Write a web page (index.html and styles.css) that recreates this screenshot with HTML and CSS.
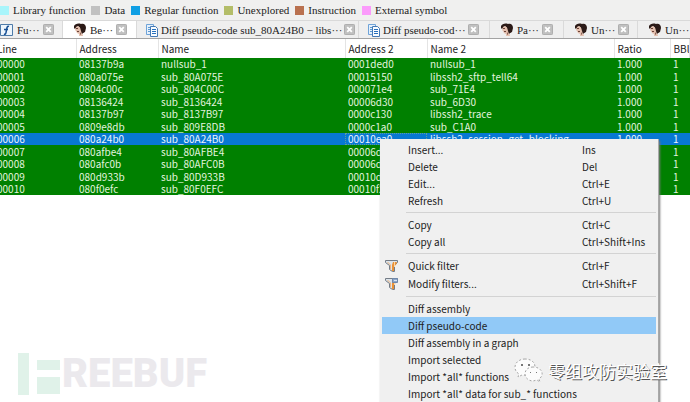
FILE: index.html
```html
<!DOCTYPE html>
<html lang="en">
<head>
<meta charset="utf-8">
<title>Diff results</title>
<link rel="stylesheet" href="styles.css">
</head>
<body>
<svg class="defs" aria-hidden="true">
  <symbol id="head" viewBox="0 0 14 14">
    <path fill="#2b1a17" d="M1 3C2 1 5 0 8 1c3-1 5 1 5 4l-1 4-2 1-2-4-3-3-3 3-1-1z"/>
    <path fill="#e3bfae" d="M3 4c2-2 4 0 5 2l1 3 1 4H6V11l-2-1-1-2-1-1z"/>
    <path fill="#6a4237" d="M3 5h2v1H3zM4 8h2v1H4zM7 9l1 2-1 1z"/>
    <path fill="#2b1a17" d="M7 4l5 1-1 4-2 2-1-3z"/>
  </symbol>
  <symbol id="diff" viewBox="0 0 14 14">
    <path fill="#e5f0fb" stroke="#6fa3d8" d="M1.500 1.500h7v10h-7z"/>
    <path stroke="#5c99d3" d="M3 4.500h4M3 6.500h3M3 8.500h3"/>
    <path fill="#f9fcff" stroke="#4579b4" d="M5.500 3.500h5l2 2v8h-7z"/>
    <path stroke="#2870bd" d="M7 6.500h4M7 8.500h4M7 10.500h4"/>
  </symbol>
  <symbol id="close" viewBox="0 0 12 12">
    <rect class="close-bg" x=".5" y=".5" width="11" height="11" rx="1"/>
    <path stroke="#fff" stroke-width="2" d="M3.500 3.500l5 5M8.500 3.500l-5 5"/>
  </symbol>
  <symbol id="funnel" viewBox="0 0 14 14">
    <path fill="#dce4eb" stroke="#747c86" d="M.5 1.500h12v2l-3 3v6h-2l-3-2v-4l-4-3z"/>
    <path fill="#e99138" d="M8 3h4l-1 3-2 1v5H7V6z"/>
    <path stroke="#fbd6a4" d="M9.500 3v5"/>
    <path stroke="#f0b47c" fill="none" d="M2.500 3l3 3v4"/>
  </symbol>
</svg>

<main class="app">
  <div class="legend">
    <span class="key library">Library function</span>
    <span class="key data">Data</span>
    <span class="key regular">Regular function</span>
    <span class="key unexplored">Unexplored</span>
    <span class="key instruction">Instruction</span>
    <span class="key external">External symbol</span>
  </div>

  <nav class="tabs">
    <div class="tab tab-first"><svg class="icon" viewBox="0 0 14 14" aria-hidden="true"><path fill="#edf5fc" stroke="#4e7ba9" d="M.5 1.500h12v11H.5z"/><path fill="none" stroke="#174f94" stroke-width="1.500" d="M9 3.500c-2-1-2 1-3 6-.5 2-1 2-2 1.500M4 6.500h4"/></svg><button class="label">Fu···</button><button class="close" aria-label="Close"><svg aria-hidden="true"><use href="#close"/></svg></button></div>
    <div class="tab tab-small active"><svg class="icon" aria-hidden="true"><use href="#head"/></svg><button class="label">Be···</button><button class="close" aria-label="Close"><svg aria-hidden="true"><use href="#close"/></svg></button></div>
    <div class="tab tab-large"><svg class="icon" aria-hidden="true"><use href="#diff"/></svg><button class="label">Diff pseudo-code sub_80A24B0 − libs···</button><button class="close" aria-label="Close"><svg aria-hidden="true"><use href="#close"/></svg></button></div>
    <div class="tab tab-medium"><svg class="icon" aria-hidden="true"><use href="#diff"/></svg><button class="label">Diff pseudo-cod···</button><button class="close" aria-label="Close"><svg aria-hidden="true"><use href="#close"/></svg></button></div>
    <div class="tab tab-small"><svg class="icon" aria-hidden="true"><use href="#head"/></svg><button class="label">Pa···</button><button class="close" aria-label="Close"><svg aria-hidden="true"><use href="#close"/></svg></button></div>
    <div class="tab tab-small"><svg class="icon" aria-hidden="true"><use href="#head"/></svg><button class="label">Un···</button><button class="close" aria-label="Close"><svg aria-hidden="true"><use href="#close"/></svg></button></div>
    <div class="tab tab-small"><svg class="icon" aria-hidden="true"><use href="#head"/></svg><button class="label">Un···</button><button class="close" aria-label="Close"><svg aria-hidden="true"><use href="#close"/></svg></button></div>
  </nav>

  <table class="results">
    <colgroup><col class="c-line"><col class="c-addr"><col class="c-name"><col class="c-addr"><col class="c-name"><col class="c-ratio"><col></colgroup>
    <thead><tr><th>Line</th><th>Address</th><th>Name</th><th>Address 2</th><th>Name 2</th><th>Ratio</th><th>BBlocks</th></tr></thead>
    <tbody>
      <tr><td>00000</td><td>08137b9a</td><td>nullsub_1</td><td>0001ded0</td><td>nullsub_1</td><td>1.000</td><td>1</td></tr>
      <tr><td>00001</td><td>080a075e</td><td>sub_80A075E</td><td>00015150</td><td>libssh2_sftp_tell64</td><td>1.000</td><td>1</td></tr>
      <tr><td>00002</td><td>0804c00c</td><td>sub_804C00C</td><td>000071e4</td><td>sub_71E4</td><td>1.000</td><td>1</td></tr>
      <tr><td>00003</td><td>08136424</td><td>sub_8136424</td><td>00006d30</td><td>sub_6D30</td><td>1.000</td><td>1</td></tr>
      <tr><td>00004</td><td>08137b97</td><td>sub_8137B97</td><td>0000c130</td><td>libssh2_trace</td><td>1.000</td><td>1</td></tr>
      <tr><td>00005</td><td>0809e8db</td><td>sub_809E8DB</td><td>0000c1a0</td><td>sub_C1A0</td><td>1.000</td><td>1</td></tr>
      <tr class="selected"><td>00006</td><td>080a24b0</td><td>sub_80A24B0</td><td class="focus">00010ea0</td><td>libssh2_session_get_blocking</td><td>1.000</td><td>1</td></tr>
      <tr><td>00007</td><td>080afbe4</td><td>sub_80AFBE4</td><td>00006d</td><td></td><td></td><td>1</td></tr>
      <tr><td>00008</td><td>080afc0b</td><td>sub_80AFC0B</td><td>00006d</td><td></td><td></td><td>1</td></tr>
      <tr><td>00009</td><td>080d933b</td><td>sub_80D933B</td><td>00010d</td><td></td><td></td><td>1</td></tr>
      <tr><td>00010</td><td>080f0efc</td><td>sub_80F0EFC</td><td>00010f2</td><td></td><td></td><td>1</td></tr>
    </tbody>
  </table>

  <div class="brand"><svg class="brand-mark" viewBox="0 0 44 42" aria-hidden="true"><path fill="#e0f2e9" d="M0 0h11v42H0zM19 7h23v10H19zM19 24h23v17H19z"/></svg><span>REEBUF</span></div>

  <div class="menu" role="menu">
    <button role="menuitem"><span>Insert...</span><kbd>Ins</kbd></button>
    <button role="menuitem"><span>Delete</span><kbd>Del</kbd></button>
    <button role="menuitem"><span>Edit...</span><kbd>Ctrl+E</kbd></button>
    <button role="menuitem"><span>Refresh</span><kbd>Ctrl+U</kbd></button>
    <hr>
    <button role="menuitem"><span>Copy</span><kbd>Ctrl+C</kbd></button>
    <button role="menuitem"><span>Copy all</span><kbd>Ctrl+Shift+Ins</kbd></button>
    <hr>
    <button role="menuitem" class="with-icon"><svg aria-hidden="true"><use href="#funnel"/></svg><span>Quick filter</span><kbd>Ctrl+F</kbd></button>
    <button role="menuitem" class="with-icon"><svg viewBox="0 0 14 14" aria-hidden="true"><use href="#funnel"/><path fill="#8fa6c8" stroke="#6f88aa" d="M7.500 1.500h5v4h-5z"/><path stroke="#d8e6f5" d="M9 3.500h3"/></svg><span>Modify filters...</span><kbd>Ctrl+Shift+F</kbd></button>
    <hr>
    <button role="menuitem"><span>Diff assembly</span></button>
    <button role="menuitem" class="hover"><span>Diff pseudo-code</span></button>
    <button role="menuitem"><span>Diff assembly in a graph</span></button>
    <button role="menuitem"><span>Import selected</span></button>
    <button role="menuitem"><span>Import *all* functions</span></button>
    <button role="menuitem"><span>Import *all* data for sub_* functions</span></button>
  </div>

  <div class="watermark"><svg viewBox="0 0 30 26" aria-hidden="true"><g fill="#fcfcfc" stroke="#a5a5a5" stroke-dasharray="2 2"><path d="M11 1C5 1 1 5 1 9c0 3 1 5 4 7l-1 3 4-2c8 1 13-3 13-8 0-5-4-8-10-8z"/><path d="M19 9c-5 0-8 3-8 7s4 7 8 7l4-1 3 2-1-3c6-4 3-12-6-12z"/></g><path fill="#777" d="M7 6h2v2H7zM14 6h2v2h-2zM16 14h1v1h-1zM22 14h1v1h-1z"/></svg><span lang="zh">零组攻防实验室</span></div>
</main>
</body>
</html>
```

FILE: styles.css
```css
* { box-sizing: border-box; }

body {
  margin: 0;
  overflow: hidden;
  background: #fff;
  color: #222;
  font: 10px/12px "Noto Sans CJK SC", sans-serif;
}

button {
  padding: 0;
  border: 0;
  background: none;
  color: inherit;
  font: inherit;
  text-align: left;
}

.defs { display: none; }

.app {
  position: relative;
  height: 100vh;
  overflow: hidden;
}

/* Colour legend */
.legend {
  display: flex;
  gap: 6px;
  height: 20px;
  background: #f0f0ef;
  font: 11px/20px "Liberation Serif", serif;
  white-space: nowrap;
}

.key { display: flex; align-items: center; gap: 4px; }
.key::before { content: ""; width: 9px; height: 9px; background: var(--swatch); }
.library { --swatch: #a9f5fb; }
.data { --swatch: #c1c1c1; }
.regular { --swatch: #109fe4; }
.unexplored { --swatch: #b3bd68; }
.instruction { --swatch: #b9714f; }
.external { --swatch: #fb9bfb; }

/* Tabs */
.tabs {
  display: flex;
  height: 19px;
  border-bottom: 1px solid #a3a3a3;
  background: #efefef;
  font: 11px/16px "Liberation Serif", serif;
}

.tab {
  display: flex;
  flex: none;
  align-items: center;
  gap: 3px;
  padding: 0 10px;
  border-top: 1px solid #d9d9d9;
  border-right: 1px solid #dadada;
  white-space: nowrap;
}

.tab-first { width: 63px; padding-left: 0; }
.tab-small { width: 74px; }
.tab-medium { width: 131px; }
.tab-large { width: 222px; }
.tab-medium, .tab-large { gap: 2px; padding-left: 8px; }
.tab .label { flex: 1; }
.tab .close { display: flex; }
.icon { flex: none; width: 14px; height: 14px; }
.close svg { width: 11px; height: 11px; }
.close-bg { fill: #c0c0c0; stroke: #a9a9a9; }
.active { background: #fff; }
.active .close-bg { fill: #d56e50; stroke: #b85338; }

/* Results */
.results {
  width: 100%;
  border-collapse: collapse;
  table-layout: fixed;
}

.c-line { width: 76px; }
.c-addr { width: 82px; }
.c-name { width: 187px; }
.c-ratio { width: 56px; }

th, td {
  padding: 0 0 0 3px;
  overflow: hidden;
  font-weight: 400;
  text-align: left;
  white-space: nowrap;
}

th { height: 19px; border-right: 1px solid #e4e4e4; }
th:first-child, td:first-child { padding: 0; text-indent: -3px; }
td { height: 13px; background: #008000; color: #e2f4df; }
tr:nth-child(odd) td { height: 12px; }
.selected td { background: #0878d2; color: #eaf5ff; }
.selected .focus { outline: 1px dotted #5d9f9f; outline-offset: -1px; }

/* Context menu */
.menu {
  position: absolute;
  top: 139px;
  left: 380px;
  width: 279px;
  padding: 2px;
  border: solid #a9a9a9;
  border-width: 0 1px 1px 0;
  background: #f0f0f0;
  box-shadow: 1px 2px 2px #777;
}

.menu button {
  display: grid;
  grid-template-columns: 26px 174px 1fr;
  align-items: center;
  width: 100%;
  height: 17px;
  white-space: nowrap;
}

.menu .with-icon { height: 18px; }
.menu span { grid-column: 2; }
.menu kbd { grid-column: 3; font: inherit; }
.menu svg { width: 14px; height: 14px; margin-left: 3px; }
.menu .hover { background: #91c9f7; }
.menu hr { height: 1px; margin: 3px 0 3px 24px; border: 0; background: #d3d3d3; }

/* Overlaid marks */
.brand {
  position: absolute;
  bottom: 7px;
  left: 18px;
  display: flex;
  align-items: center;
  color: #ebe9ed;
  font: 900 40px/42px Roboto, sans-serif;
}

.brand-mark { width: 44px; height: 42px; }

.watermark {
  position: absolute;
  right: 23px;
  bottom: 18px;
  display: flex;
  align-items: center;
  gap: 4px;
  color: #fff;
  font: 17px/26px "Noto Sans CJK SC", sans-serif;
  text-shadow: 1px 1px 0 #555;
}

.watermark svg { width: 30px; height: 26px; }
```
